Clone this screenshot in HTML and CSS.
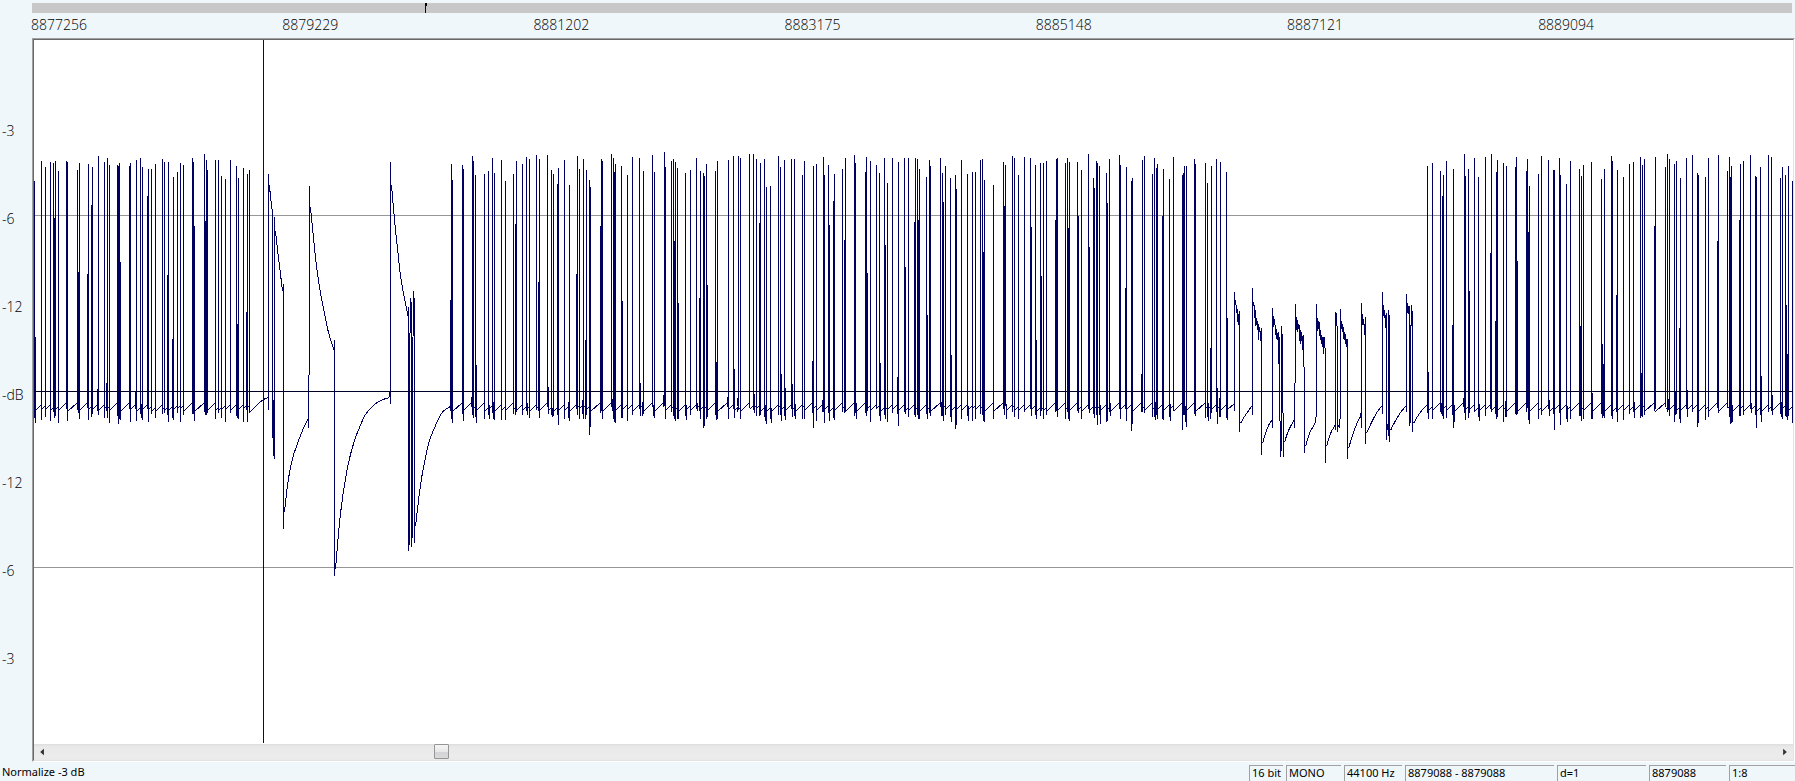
FILE: index.html
```html
<!DOCTYPE html>
<html lang="en">
<head>
<meta charset="utf-8">
<title>Waveform editor</title>
<link rel="stylesheet" href="styles.css">
</head>
<body>
<header class="overview">
  <div class="overview-bar"><span class="overview-marker"></span></div>
  <div class="ruler">
    <span>8877256</span><span>8879229</span><span>8881202</span><span>8883175</span><span>8885148</span><span>8887121</span><span>8889094</span>
  </div>
</header>
<main class="editor">
  <div class="scale">
    <span>-3</span><span>-6</span><span>-12</span><span>-dB</span><span>-12</span><span>-6</span><span>-3</span>
  </div>
  <section class="panel">
    <div class="plot">
      <svg class="wave" viewBox="34 40 1759 704" preserveAspectRatio="none" role="img" aria-label="Waveform">
        <path class="grid" d="M34 215h1759v1H34zM34 567h1759v1H34z"/>
        <path class="fill" id="spikes"/>
        <path class="line" id="curves"/>
        <path class="zero" d="M34 391h1759v1H34z"/>
        <path class="cursor" d="M263 40h1v703h-1z"/>
      </svg>
    </div>
    <div class="scroll">
      <button class="arrow" type="button" aria-label="Scroll left"><svg viewBox="0 0 17 16"><path d="M10 4v7L6 7.500z"/></svg></button>
      <input class="slider" type="range" min="0" max="1000" value="224" aria-label="Position">
      <button class="arrow" type="button" aria-label="Scroll right"><svg viewBox="0 0 17 16"><path d="M7 4v7l4-3.500z"/></svg></button>
    </div>
  </section>
</main>
<footer class="status">
  <span class="message">Normalize -3 dB</span>
  <span class="cell bits">16 bit</span>
  <span class="cell channels">MONO</span>
  <span class="cell rate">44100 Hz</span>
  <span class="cell range">8879088 - 8879088</span>
  <span class="cell delta">d=1</span>
  <span class="cell position">8879088</span>
  <span class="cell ratio">1:8</span>
</footer>
<script src="wave.js"></script>
</body>
</html>
```

FILE: styles.css
```css
* { box-sizing: border-box; }
body {
  margin: 0;
  min-height: 100vh;
  display: flex;
  flex-direction: column;
  background: #eff7fb;
  color: #000;
  font-family: "Noto Sans", sans-serif;
  font-size: 14px;
}
.overview { padding: 3px 0 0 32px; }
.overview-bar {
  height: 10px;
  margin-right: 3px;
  padding-left: 22.300%;
  background: #c8c8c8;
}
.overview-marker {
  display: block;
  width: 2px;
  height: 10px;
  background: linear-gradient(#000, #000) 0 0 / 2px 3px no-repeat, linear-gradient(#000060, #000060) 0 0 / 1px 10px no-repeat;
}
.ruler {
  display: flex;
  height: 25px;
  margin-left: -1px;
  line-height: 23px;
  font-family: "Open Sans", "Noto Sans", sans-serif;
  font-weight: 300;
}
.ruler span { flex: 0 0 14.240%; }
.ruler span:last-child { flex: 1; }
.editor { flex: 1; display: flex; }
.scale {
  width: 32px;
  padding: 4px 0 16px 2px;
  display: grid;
  grid-template-rows: 1fr repeat(7, 2fr) 1fr;
  align-items: center;
  font-family: "Open Sans", "Noto Sans", sans-serif;
  font-weight: 300;
}
.scale::before { content: ""; }
.panel {
  flex: 1;
  min-width: 0;
  display: flex;
  flex-direction: column;
  background: #fff;
  border-style: solid;
  border-width: 1px;
  border-color: #a0a0a0 #fff #fff #a0a0a0;
}
.plot {
  flex: 1;
  display: flex;
  border-style: solid;
  border-width: 1px 1px 0 1px;
  border-color: #696969 #e3e3e3 #e3e3e3 #696969;
}
.wave { flex: 1; width: 100%; height: 100%; min-width: 0; shape-rendering: crispEdges; }
.grid { fill: #969696; }
.fill { fill: #000060; }
.line { fill: none; stroke: #000060; stroke-width: 1; }
.zero { fill: #000028; }
.cursor { fill: #0000a0; }
.scroll {
  height: 17px;
  display: flex;
  border-style: solid;
  border-width: 0 1px 1px 1px;
  border-color: #e3e3e3 #e3e3e3 #e3e3e3 #696969;
  background: linear-gradient(#dedede, #e9e9e9 3px, #ececec 13px, #e9e9e9);
}
.arrow { width: 17px; padding: 0; border: 0; background: none; }
.arrow svg { display: block; width: 17px; height: 15px; fill: #303030; }
.slider { flex: 1; min-width: 0; height: 15px; margin: 0; background: none; appearance: none; }
.slider::-webkit-slider-thumb {
  appearance: none;
  width: 15px;
  height: 15px;
  border: 1px solid #959595;
  border-radius: 1px;
  background: linear-gradient(#f5f5f5, #e8e8e8 50%, #d2d2d8 51%, #dadada);
}
.status {
  height: 19px;
  padding-top: 3px;
  display: flex;
  gap: 3px;
  font-size: 11px;
  line-height: 14px;
  white-space: nowrap;
}
.message { flex: 1; padding-left: 2px; }
.cell {
  padding-left: 2px;
  border-top: 1px solid #a0a0a0;
  border-left: 1px solid #a0a0a0;
  line-height: 14px;
}
.bits { width: 34px; }
.channels { width: 55px; }
.rate { width: 58px; }
.range { width: 149px; }
.delta { width: 89px; }
.position { width: 77px; }
.ratio { width: 66px; }
```

FILE: wave.js
```js
// Signal extents per column: x, highest point, lowest point.
const blocks = [
`34,181,418 35,337,423 41,161,420 45,167,417 50,162,421 53,163,408 54,218,418 55,161,416 58,171,423 66,161,409 67,162,421 77,170,410 78,272,413 79,163,419 87,274,408 88,164,420 91,205,417 92,167,414 97,389,411 98,156,415 104,162,418 106,383,409 107,158,418 109,165,423 117,165,416 118,166,424 119,163,419 120,262,420 129,166,409 130,163,422 135,392,409 136,160,421 140,158,414 141,404,418 142,167,420 147,196,408 148,169,422 151,169,414 155,164,418 162,159,414 164,162,413 167,275,415 168,162,422 172,339,418 173,177,420 177,172,413 180,163,422 183,165,415 192,158,414 193,162,414 194,226,421 204,154,412 205,221,415 206,160,415 207,170,413 215,160,419 218,160,413 221,176,418 225,179,422 230,160,413 236,166,416 237,324,418 238,178,419 243,168,422 246,312,410 247,174,422 249,170,413`,
`450,300,411 451,164,419 452,180,423 462,165,414 463,169,421 471,397,404 472,156,415 473,161,418 475,175,417 476,365,423 484,174,419 488,171,415 489,405,419 492,158,413 493,402,419 494,173,420 501,160,420 505,181,420 513,174,414 515,224,415 516,161,412 522,164,415 526,157,406 527,403,415 529,159,418 536,155,410 538,282,408 539,159,418 547,155,404 548,387,414 551,170,415 552,408,417 553,174,416 557,184,415 558,168,425 564,160,419 568,402,418 569,185,421 576,274,406 577,156,415 579,169,419 582,400,414 583,159,419 585,340,419 586,170,415 589,180,435 590,187,427 600,226,413 601,159,411 602,161,419 611,154,406 612,399,411 613,158,419 614,172,422 615,164,423 621,166,418 622,301,418 627,175,421 632,157,415 639,158,407 640,383,416 642,402,416 643,171,414 652,155,407 653,405,416 654,172,418 663,395,404 664,152,406 665,167,419 671,161,412 673,159,416 674,241,419 675,162,421 677,168,419 678,303,419 685,173,416 686,405,420 690,170,415 696,158,407 697,403,411 699,298,411 700,171,419 703,173,428 704,176,426 706,164,419 707,285,417 715,171,415 716,362,420 717,161,419 727,397,404 728,160,419 733,156,409 734,369,418 737,398,406 738,156,410 740,158,419 749,154,408 753,154,410 754,394,413 756,159,416 759,223,416 760,163,415 764,159,417 765,405,421 766,187,424 770,186,419 771,408,423 778,156,415 780,167,415 781,374,421 784,160,416 785,388,420 791,159,408 792,384,417 794,159,416 795,404,419 802,175,419 804,161,419 812,361,413 813,166,428 816,164,421 822,400,412 823,157,412 824,175,423 828,165,413 829,225,421 833,201,418 834,174,420 842,169,412 844,240,413 845,158,412 854,155,416 855,163,413 856,403,419 865,172,413 866,157,416 867,273,411 870,161,422 876,165,408 879,173,416 880,363,421 884,158,415 885,245,419 887,183,422 892,158,413 897,377,414 898,162,426 904,158,412 905,267,414 908,158,417 914,222,415 915,158,417 917,159,415 918,220,419 919,169,419 926,177,414 927,315,419 929,160,413 930,166,416 940,158,406 941,402,416 942,173,416 943,202,421 945,166,415 950,178,417 951,355,422 955,175,429 956,189,425 961,160,419 967,174,416 968,406,421 972,172,421 975,172,419 980,160,414 982,159,415 983,252,421 984,180,422 993,185,419 1003,162,409 1004,206,415 1005,165,406 1006,404,419 1012,156,412 1014,158,417 1018,175,419 1024,157,412 1030,158,406 1031,227,416 1035,165,415 1036,340,419 1040,163,416 1041,276,411 1043,163,419 1046,161,415 1055,220,412 1056,159,411 1057,158,417 1065,163,419 1067,158,412 1068,228,419 1069,162,421 1077,162,411 1078,216,413 1081,170,419 1088,154,406 1089,247,413 1093,178,414 1094,188,418 1096,161,415 1097,163,425 1099,166,415 1100,405,424 1106,173,422 1107,203,421 1109,159,412 1110,403,416 1119,155,409 1120,165,419 1125,288,408 1126,167,421 1131,181,431 1132,178,424 1141,374,412 1142,160,412 1144,156,413 1152,174,417 1154,158,417 1155,402,420 1156,168,415 1157,164,419 1162,216,419 1163,169,420 1169,179,417 1170,404,421 1173,157,411 1182,175,430 1183,173,415 1184,166,415 1185,406,422 1186,166,427 1194,159,414 1195,164,416 1205,163,418 1207,183,417 1208,403,421 1210,348,419 1211,166,413 1216,159,412 1217,388,424 1219,398,417 1220,162,417 1226,172,418 1227,318,420`,
`1427,166,413 1428,372,419 1432,163,419 1440,171,412 1441,403,414 1442,196,416 1443,175,419 1446,161,418 1452,325,415 1453,169,428 1454,405,422 1463,398,405 1464,154,413 1465,176,420 1468,169,418 1469,291,413 1474,158,412 1478,177,417 1479,404,421 1485,157,416 1490,253,408 1491,154,412 1495,321,414 1496,172,419 1497,160,417 1503,163,422 1505,401,417 1506,166,417 1515,167,414 1516,157,415 1517,261,414 1526,171,412 1527,159,408 1528,232,420 1529,186,424 1538,174,419 1541,156,415 1548,160,408 1549,400,416 1553,170,414 1554,170,430 1559,158,413 1560,175,425 1566,184,419 1567,406,422 1570,161,419 1579,169,416 1580,326,416 1581,176,421 1583,165,419 1591,162,419 1592,393,419 1601,179,414 1602,344,418 1603,364,416 1604,169,418 1611,156,416 1612,161,419 1616,295,411 1617,170,422 1623,177,420 1629,164,414 1633,162,412 1634,402,418 1640,157,418 1641,373,416 1642,165,417 1644,159,415 1654,226,411 1655,157,409 1665,167,403 1667,154,408 1668,399,410 1669,159,416 1674,164,422 1675,392,415 1676,161,414 1679,328,419 1680,178,423 1686,158,408 1687,390,417 1692,155,412 1697,173,427 1698,175,423 1705,177,420 1708,158,417 1717,241,408 1718,155,413 1727,171,408 1729,157,417 1730,177,424 1731,166,423 1732,405,422 1739,220,416 1740,164,416 1743,161,415 1750,155,408 1751,403,413 1755,176,415 1756,177,428 1760,167,415 1761,376,422 1768,155,412 1771,157,410 1772,395,415 1780,178,414 1781,402,417 1782,167,419 1785,175,416 1786,305,417 1787,354,420 1788,166,416 1792,181,423`
];
const pulses = `268,174,410 272,213,438 273,400,456 274,217,459 283,284,529 308,375,428 309,186,375 334,340,576 389,392,397 390,162,404 408,307,551 409,333,545 410,298,333 411,302,547 412,337,538 413,291,336 414,298,543
1234,292,411 1235,300,305 1236,305,313 1237,309,322 1238,314,325 1239,311,432 1252,288,415 1253,302,306 1254,305,318 1255,310,326 1256,318,325 1257,321,330 1258,324,340 1259,327,332 1260,331,341 1261,328,455
1272,308,428 1273,316,327 1274,319,325 1275,325,335 1276,329,339 1277,333,340 1278,332,364 1279,337,421 1280,421,457 1281,326,451 1282,334,413 1283,413,457 1294,383,428 1295,304,383 1296,317,330 1297,320,332 1298,324,329 1299,325,341 1300,330,344 1301,332,341 1302,336,350 1303,335,367 1304,367,453
1315,417,422 1316,304,417 1317,318,331 1318,321,329 1319,322,336 1320,330,340 1321,335,344 1322,337,347 1323,337,354 1324,337,348 1325,348,463 1335,312,430 1336,313,326 1337,326,432 1338,425,427 1339,419,428 1340,309,419 1341,321,329 1342,324,332 1343,327,339 1344,332,340 1345,334,344 1346,339,347 1347,339,459
1360,413,417 1361,303,428 1362,314,325 1363,319,325 1364,324,335 1365,317,444 1382,292,414 1383,305,316 1384,310,318 1385,315,328 1386,313,440 1387,424,430 1388,310,436 1389,315,442 1406,294,412 1407,303,313 1408,306,314 1409,306,426 1410,325,423 1411,305,326 1412,311,432`;
// Smooth charge and discharge stretches between pulses.
const curves = [
  "249,412 253,408 258,403 263,399 268,397",
  "269,185 270,196 272,213", "275,231 277,249 279,265 282,291",
  "284,512 286,493 288,478 292,458 297,443 302,430 308,418",
  "310,207 313,237 315,257 318,280 321,298 324,313 328,332 334,351",
  "335,569 338,533 341,505 345,478 349,458 354,440 359,427 365,414 373,405 380,400 389,397",
  "391,185 393,208 395,230 397,248 400,275 404,298 408,318",
  "415,526 418,500 421,478 425,457 429,440 435,425 441,413 445,409 450,406",
  "1227,409 1234,403", "1240,423 1244,416 1251,406", "1262,443 1265,433 1268,425 1272,419",
  "1284,442 1288,430 1294,419", "1305,446 1309,433 1315,422", "1326,446 1330,433 1335,424",
  "1348,448 1352,435 1356,424 1360,416", "1366,433 1371,422 1377,411 1382,405",
  "1390,430 1394,422 1400,412 1406,405", "1413,423 1417,416 1422,409 1427,404"
];
const parse = text => text.trim().split(/\s+/).map(item => item.split(",").map(Number));
const bar = ([x, top, bottom]) => `M${x} ${top}h1V${bottom}h-1z`;

// Passes a smooth cubic curve through every listed point.
function smooth(points) {
  const p = points.map(([x, y]) => [x + 0.5, y + 0.5]);
  let d = `M${p[0]}`;
  for (let i = 0; i < p.length - 1; i++) {
    const before = p[i - 1] || p[i];
    const a = p[i];
    const b = p[i + 1];
    const after = p[i + 2] || b;
    d += `C${a[0] + (b[0] - before[0]) / 6} ${a[1] + (b[1] - before[1]) / 6} ${b[0] - (after[0] - a[0]) / 6} ${b[1] - (after[1] - a[1]) / 6} ${b[0]} ${b[1]}`;
  }
  return d;
}

let fill = parse(pulses).map(bar).join("");
let line = curves.map(c => smooth(parse(c))).join("");

for (const block of blocks) {
  const columns = parse(block);
  fill += columns.map(bar).join("");
  for (let i = 1; i < columns.length; i++) {
    const from = columns[i - 1][0];
    const to = columns[i][0];
    const gap = to - from;
    if (gap < 2) continue;
    // Longer rests between pulses drift further up toward zero.
    const end = gap > 7 ? 402 : gap > 4 ? 404 : 405 + to % 3;
    const start = end + Math.min(9, gap);
    line += `M${from + 0.5} ${start + 0.5}L${to + 0.5} ${end + 0.5}`;
    fill += bar([to, end, end + 5]);
  }
}
document.getElementById("spikes").setAttribute("d", fill);
document.getElementById("curves").setAttribute("d", line);
```
